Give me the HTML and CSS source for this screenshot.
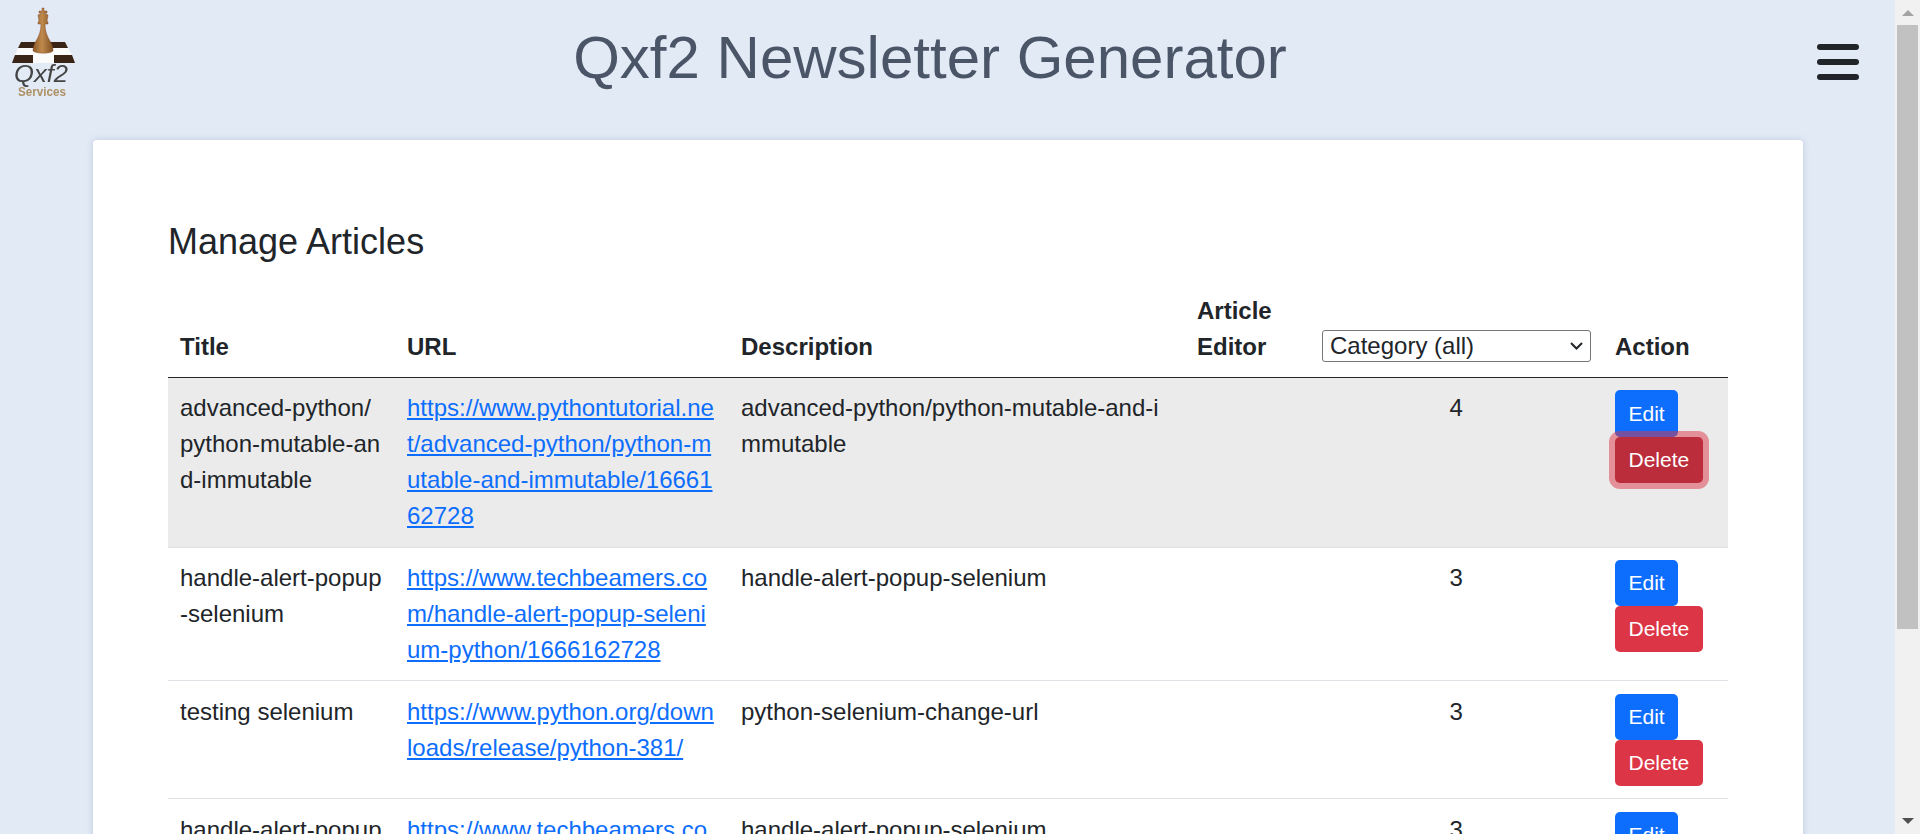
FILE: index.html
```html
<!DOCTYPE html>
<html lang="en">
<head>
    <meta charset="UTF-8">
    <meta name="viewport" content="width=device-width, initial-scale=1.0">
    <title>Qxf2 Newsletter Generator</title>
    <link rel="stylesheet" href="styles.css">
</head>
<body>
    <div class="page">
        <header class="topbar">
            <svg class="logo" viewBox="0 0 80 100" width="80" height="100">
                <defs>
                    <linearGradient id="wood" x1="0" x2="1" y1="0" y2="0">
                        <stop offset="0" stop-color="#8a5a2a"/>
                        <stop offset="0.45" stop-color="#c08a4c"/>
                        <stop offset="1" stop-color="#7d4f22"/>
                    </linearGradient>
                </defs>
                <polygon points="21,42 65,42 68,48 18,48" fill="#3a2415"/>
                <polygon points="18,48 68,48 72,55 15,55" fill="#fbfbfb"/>
                <polygon points="15,55 33,55 33,63 12,63" fill="#3a2415"/>
                <polygon points="54,55 72,55 75,63 54,63" fill="#3a2415"/>
                <polygon points="33,55 54,55 54,63 33,63" fill="#fbfbfb"/>
                <path d="M42 8h2v3h3v2h-3l4 2-1 6 1 1v2h-3c0 7 2 12 5 17 2 3 3 6 3 10-3 3-16 3-20 0 0-4 1-7 3-10 3-5 5-10 5-17h-3v-2l1-1-1-6 4-2h-3v-2h3z" fill="url(#wood)" stroke="#7a3b1c" stroke-width="0.4"/>
                <text class="logo-name" x="14" y="82" textLength="54" lengthAdjust="spacingAndGlyphs">Qxf2</text>
                <text class="logo-sub" x="18" y="96" textLength="48" lengthAdjust="spacingAndGlyphs">Services</text>
            </svg>
            <h1 class="app-title">Qxf2 Newsletter Generator</h1>
            <button class="menu-btn" type="button" aria-label="Menu">
                <span></span><span></span><span></span>
            </button>
        </header>

        <main class="card">
            <h3 class="card-title">Manage Articles</h3>
            <table class="articles">
                <colgroup>
                    <col class="col-title">
                    <col class="col-url">
                    <col class="col-desc">
                    <col class="col-editor">
                    <col class="col-cat">
                    <col class="col-action">
                </colgroup>
                <thead>
                    <tr>
                        <th>Title</th>
                        <th>URL</th>
                        <th>Description</th>
                        <th class="th-editor">Article Editor</th>
                        <th class="th-cat">
                            <select class="cat-select">
                                <option>Category (all)</option>
                            </select>
                        </th>
                        <th>Action</th>
                    </tr>
                </thead>
                <tbody>
                    <tr class="selected">
                        <td>advanced-python/<br>python-mutable-and-immutable</td>
                        <td><a href="#">https://www.pythontutorial.net/advanced-python/python-mutable-and-immutable/1666162728</a></td>
                        <td>advanced-python/python-mutable-and-immutable</td>
                        <td></td>
                        <td class="cat-num">4</td>
                        <td><button class="btn btn-edit">Edit</button><button class="btn btn-delete focused">Delete</button></td>
                    </tr>
                    <tr>
                        <td>handle-alert-popup-selenium</td>
                        <td><a href="#">https://www.techbeamers.com/handle-alert-popup-selenium-python/1666162728</a></td>
                        <td>handle-alert-popup-selenium</td>
                        <td></td>
                        <td class="cat-num">3</td>
                        <td><button class="btn btn-edit">Edit</button><button class="btn btn-delete">Delete</button></td>
                    </tr>
                    <tr>
                        <td class="keep-words">testing selenium</td>
                        <td><a href="#">https://www.python.org/downloads/release/python-381/</a></td>
                        <td>python-selenium-change-url</td>
                        <td></td>
                        <td class="cat-num">3</td>
                        <td><button class="btn btn-edit">Edit</button><button class="btn btn-delete">Delete</button></td>
                    </tr>
                    <tr>
                        <td>handle-alert-popup-selenium</td>
                        <td><a href="#">https://www.techbeamers.com/handle-alert-popup-selenium-python/1666162728</a></td>
                        <td>handle-alert-popup-selenium</td>
                        <td></td>
                        <td class="cat-num">3</td>
                        <td><button class="btn btn-edit">Edit</button><button class="btn btn-delete">Delete</button></td>
                    </tr>
                </tbody>
            </table>
        </main>
    </div>

    <div class="scrollbar">
        <svg class="arrow arrow-up" viewBox="0 0 12 6" width="12" height="6"><polygon points="6,0 12,6 0,6" fill="#a3a3a3"/></svg>
        <div class="scroll-track"><div class="scroll-thumb"></div></div>
        <svg class="arrow arrow-down" viewBox="0 0 12 6" width="12" height="6"><polygon points="0,0 12,0 6,6" fill="#505050"/></svg>
    </div>
</body>
</html>
```

FILE: styles.css
```css
html, body {
    height: 100%;
    margin: 0;
    overflow: hidden;
}
body {
    display: flex;
    font-family: "Liberation Sans", Arial, sans-serif;
    font-size: 24px;
    line-height: 36px;
    color: #212529;
    background: #e2eaf5;
}
.page {
    flex: 1;
    min-width: 0;
    height: 100%;
    overflow: hidden;
}

/* top bar */
.topbar {
    display: flex;
    align-items: flex-start;
    height: 140px;
}
.logo {
    flex: none;
    filter: blur(0.4px);
}
.logo-name {
    font-family: "Liberation Sans", Arial, sans-serif;
    font-style: italic;
    font-size: 24px;
    fill: #444;
}
.logo-sub {
    font-family: "Liberation Sans", Arial, sans-serif;
    font-size: 12px;
    font-weight: 700;
    fill: #ad9166;
}
.app-title {
    flex: 1;
    margin: 22px 0 0;
    padding-right: 37px;
    text-align: center;
    font-size: 60px;
    font-weight: 400;
    line-height: 72px;
    color: #4a5568;
}
.menu-btn {
    flex: none;
    display: flex;
    flex-direction: column;
    gap: 9px;
    width: 42px;
    margin: 44px 36px 0 0;
    padding: 0;
    border: none;
    background: none;
}
.menu-btn span {
    height: 6px;
    border-radius: 3px;
    background: #212529;
}

/* card */
.card {
    margin: 0 92px 0 93px;
    padding: 76px 75px 0 75px;
    background: #fff;
    border-radius: 4px;
    box-shadow: 0 0 6px rgba(120, 140, 190, 0.35);
}
.card-title {
    margin: 0 0 13.5px;
    font-size: 36px;
    font-weight: 400;
    line-height: 51px;
}

/* table */
.articles {
    width: 100%;
    table-layout: fixed;
    border-collapse: collapse;
}
.col-title { width: 227px; }
.col-url { width: 334px; }
.col-desc { width: 456px; }
.col-editor { width: 125px; }
.col-cat { width: 293px; }
.col-action { width: 125px; }
.articles th {
    padding: 12.3px 12.5px 12.3px 12px;
    text-align: left;
    vertical-align: bottom;
    font-weight: 700;
    border-bottom: 1px solid #212529;
}
.articles .th-cat {
    padding-bottom: 15.5px;
}
.articles td {
    padding: 12.3px 12.5px 12.3px 12px;
    vertical-align: top;
    word-break: break-all;
    border-bottom: 1px solid #dee2e6;
}
.articles td.keep-words {
    word-break: normal;
}
.selected td {
    background: #ebebeb;
}
.articles a {
    color: #0d6efd;
}
.cat-num {
    text-align: center;
}
.cat-select {
    display: block;
    width: 268.5px;
    height: 32px;
    padding: 0 0 0 7px;
    font-family: "Liberation Sans", Arial, sans-serif;
    font-size: 24px;
    color: #212529;
    appearance: none;
    background: #fff url("data:image/svg+xml,%3Csvg xmlns='http://www.w3.org/2000/svg' width='13' height='8'%3E%3Cpath d='M1 1l5.5 5.5L12 1' fill='none' stroke='%23212529' stroke-width='2'/%3E%3C/svg%3E") no-repeat right 7px center;
    border: 1px solid #767676;
    border-radius: 3px;
}

/* buttons */
.btn {
    display: block;
    height: 46.25px;
    padding: 0 13.5px;
    font-family: "Liberation Sans", Arial, sans-serif;
    font-size: 21px;
    color: #fff;
    border: none;
    border-radius: 5px;
}
.btn-edit {
    background: #0d6efd;
}
.btn-delete {
    background: #dc3545;
}
.btn-delete.focused {
    position: relative;
    background: #bb2d3b;
    box-shadow: 0 0 0 6px rgba(220, 53, 69, 0.5);
}

/* scrollbar on the right */
.scrollbar {
    flex: none;
    display: flex;
    flex-direction: column;
    align-items: center;
    width: 25px;
    height: 100%;
    background: #f1f1f1;
}
.arrow {
    flex: none;
}
.arrow-up {
    margin: 10px 0 9px;
}
.arrow-down {
    margin: 0 0 10px;
}
.scroll-track {
    flex: 1;
    width: 21px;
}
.scroll-thumb {
    height: 604px;
    background: #c1c1c1;
}
```
